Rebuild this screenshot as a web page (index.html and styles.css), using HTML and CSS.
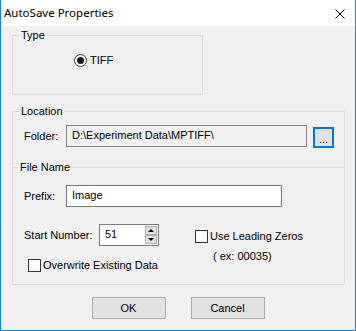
FILE: index.html
```html
<!DOCTYPE html>
<html>
  <head>
    <title>AutoSave Properties</title>
    <meta charset="UTF-8" />
    <link rel="stylesheet" href="styles.css">
  </head>
  <body>
    <div class="window">
      <div class="titlebar">
        <span class="title">AutoSave Properties</span>
        <svg class="close" width="10" height="10" viewBox="0 0 10 10">
          <path d="M0.5 0.5 L9.5 9.5 M9.5 0.5 L0.5 9.5" stroke="#000" stroke-width="1" fill="none" />
        </svg>
      </div>

      <div class="dialog">
        <fieldset class="group group-type">
          <legend>Type</legend>
          <div class="radio-row">
            <span class="radio checked"></span>
            <span>TIFF</span>
          </div>
        </fieldset>

        <fieldset class="group group-location">
          <legend>Location</legend>
          <div class="row row-folder">
            <span class="field-label">Folder:</span>
            <input class="textbox folder-box" type="text" value="D:\Experiment Data\MPTIFF\" readonly />
            <button class="browse">...</button>
          </div>

          <fieldset class="subgroup">
            <legend>File Name</legend>
            <div class="row row-prefix">
              <span class="field-label">Prefix:</span>
              <input class="textbox prefix-box" type="text" value="Image" />
            </div>

            <div class="number-area">
              <div class="number-left">
                <div class="row">
                  <span class="field-label start-label">Start Number:</span>
                  <div class="spin">
                    <input class="spin-value" type="text" value="51" />
                    <div class="spin-btns">
                      <span class="spin-btn"><span class="arrow-up"></span></span>
                      <span class="spin-btn"><span class="arrow-down"></span></span>
                    </div>
                  </div>
                </div>
                <div class="check-row overwrite">
                  <span class="checkbox"></span>
                  <span>Overwrite Existing Data</span>
                </div>
              </div>
              <div class="number-right">
                <div class="check-row">
                  <span class="checkbox"></span>
                  <span>Use Leading Zeros</span>
                </div>
                <div class="example">( ex: 00035)</div>
              </div>
            </div>
          </fieldset>
        </fieldset>

        <div class="buttons">
          <button class="button">OK</button>
          <button class="button">Cancel</button>
        </div>
      </div>
    </div>
  </body>
</html>
```

FILE: styles.css
```css
body {
  margin: 0;
  padding: 0;
  font-family: "Liberation Sans", Arial, sans-serif;
  font-size: 11px;
  line-height: 13px;
  color: #000;
  background: #fff;
}

.window {
  width: 356px;
  height: 331px;
  box-sizing: border-box;
  border: 1px solid #1883d7;
  border-top: none;
  background-color: #f0f0f0;
  display: flex;
  flex-direction: column;
}

/* title bar */
.titlebar {
  height: 26px;
  background-color: #fff;
  display: flex;
  align-items: center;
  justify-content: space-between;
  padding: 0 10px 0 3px;
}
.title {
  font-family: "Noto Sans", sans-serif;
  font-size: 11.5px;
  line-height: 16px;
}
.close {
  display: block;
  margin-top: 1px;
}

/* group boxes */
.dialog {
  padding: 0 0 0 11px;
}
.group {
  margin: 3px 0 0 0;
  padding: 0;
  border: 1px solid #dcdcdc;
  box-sizing: border-box;
  min-inline-size: 0;
}
.group legend,
.subgroup legend {
  padding: 0 1px;
  margin-left: 7px;
  line-height: 13px;
}
.group-type {
  width: 191px;
  height: 66px;
}
.group-location {
  margin-top: 10px;
  width: 333px;
  height: 180px;
}
.subgroup {
  margin: 14px 0 0 0;
  padding: 0;
  border: none;
  border-top: 1px solid #dcdcdc;
  min-inline-size: 0;
}
.subgroup legend {
  margin-left: 6px;
}

/* radio */
.radio-row {
  display: flex;
  align-items: center;
  gap: 3px;
  margin: 12px 0 0 61px;
}
.radio {
  width: 13px;
  height: 13px;
  box-sizing: border-box;
  border: 1px solid #333;
  border-radius: 50%;
  background: #fff;
  display: flex;
  align-items: center;
  justify-content: center;
}
.radio.checked::after {
  content: "";
  width: 7px;
  height: 7px;
  border-radius: 50%;
  background: #1a1a1a;
}

/* rows */
.row {
  display: flex;
  align-items: center;
  height: 22px;
}
.row-folder {
  margin-top: 7px;
  padding-left: 11px;
}
.row-prefix {
  margin-top: 11px;
  padding-left: 11px;
}
.field-label {
  width: 42px;
}
.start-label {
  width: 75px;
}
.textbox {
  height: 22px;
  box-sizing: border-box;
  border: 1px solid #7a7a7a;
  padding: 0 0 2px 5px;
  margin: 0;
  font-family: inherit;
  font-size: 11px;
  color: #000;
  background: #fff;
  outline: none;
}
.folder-box {
  width: 241px;
  background: #f0f0f0;
  border-color: #828282;
}
.prefix-box {
  width: 216px;
}
.browse {
  width: 21px;
  height: 21px;
  margin: 2px 0 0 6px;
  box-sizing: border-box;
  border: 2px solid #0078d7;
  background: #e1e1e1;
  padding: 4px 0 0 0;
  font-family: inherit;
  font-size: 11px;
  line-height: 11px;
}

/* start number + checkboxes */
.number-area {
  display: flex;
  padding-left: 11px;
  margin-top: 17px;
}
.number-left {
  width: 171px;
}
.spin {
  width: 60px;
  height: 22px;
  box-sizing: border-box;
  border: 1px solid #7a7a7a;
  background: #fff;
  display: flex;
}
.spin-value {
  width: 40px;
  border: none;
  padding: 0 0 2px 5px;
  margin: 0;
  font-family: inherit;
  font-size: 11px;
  outline: none;
  background: transparent;
}
.spin-btns {
  width: 16px;
  margin-left: auto;
  padding: 1px 1px 1px 0;
  display: flex;
  flex-direction: column;
}
.spin-btn {
  flex: 1;
  border: 1px solid #adadad;
  background: #e1e1e1;
  display: flex;
  align-items: center;
  justify-content: center;
}
.arrow-up {
  border-left: 3px solid transparent;
  border-right: 3px solid transparent;
  border-bottom: 3px solid #000;
}
.arrow-down {
  border-left: 3px solid transparent;
  border-right: 3px solid transparent;
  border-top: 3px solid #000;
}
.check-row {
  display: flex;
  align-items: center;
  gap: 2px;
}
.checkbox {
  width: 13px;
  height: 13px;
  box-sizing: border-box;
  border: 1px solid #333;
  background: #fff;
}
.overwrite {
  margin: 13px 0 0 4px;
}
.number-right {
  padding-top: 6px;
}
.example {
  margin: 7px 0 0 18px;
}

/* bottom buttons */
.buttons {
  display: flex;
  justify-content: center;
  gap: 25px;
  margin: 12px 0 0 -11px;
}
.button {
  width: 74px;
  height: 22px;
  box-sizing: border-box;
  border: 1px solid #adadad;
  background: #e1e1e1;
  font-family: inherit;
  font-size: 11px;
  padding: 0;
}
```
